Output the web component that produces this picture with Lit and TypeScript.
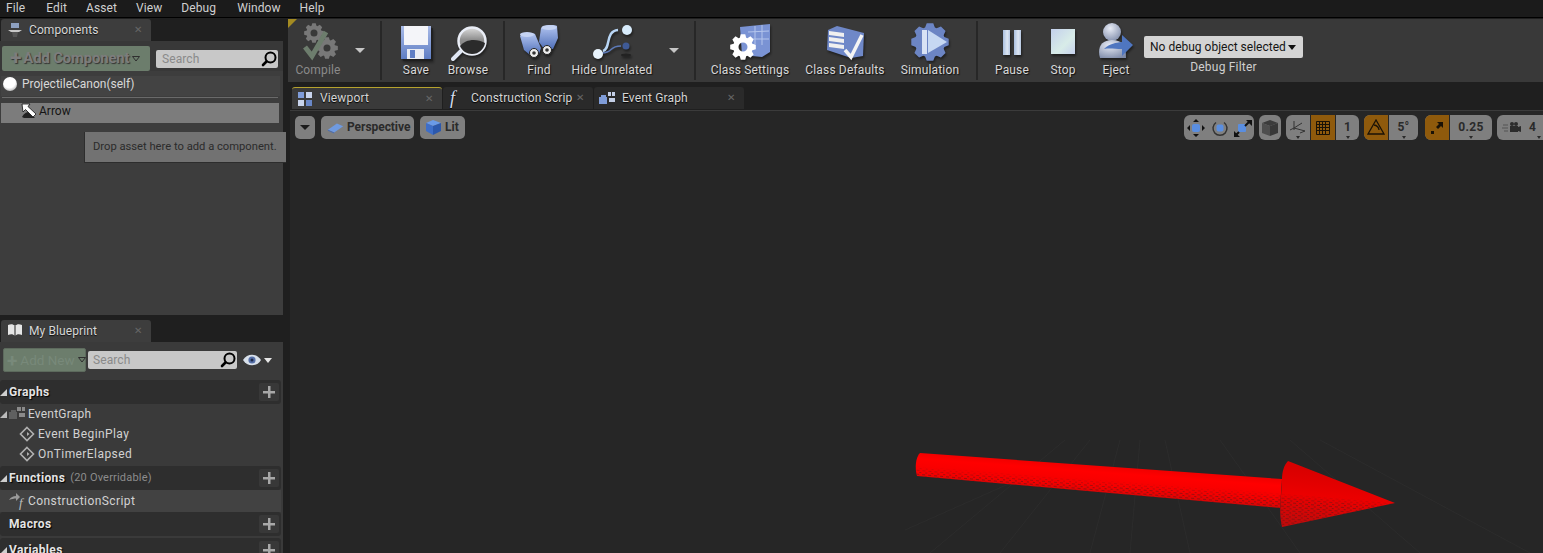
import { LitElement, html, css } from "lit";
import { customElement } from "lit/decorators.js";

function gear(cx: number, cy: number, r: number, teeth: number, hole: number, depth = 0.24): string {
  const pts: string[] = [];
  const step = (Math.PI * 2) / teeth;
  const inner = r * (1 - depth);
  for (let i = 0; i < teeth; i++) {
    const a = i * step - Math.PI / 2;
    const seq: [number, number][] = [
      [inner, a - step * 0.42], [r, a - step * 0.22], [r, a + step * 0.22], [inner, a + step * 0.42],
    ];
    for (const [rad, an] of seq) pts.push(`${(cx + rad * Math.cos(an)).toFixed(2)} ${(cy + rad * Math.sin(an)).toFixed(2)}`);
  }
  const h = hole;
  return `M${pts.join("L")}Z M${cx - h} ${cy}a${h} ${h} 0 1 0 ${2 * h} 0a${h} ${h} 0 1 0 ${-2 * h} 0Z`;
}

const toolIcons: Record<string, unknown> = {
  compile: html`<svg class="ti" viewBox="0 0 44 40">
    <path fill="#787878" fill-rule="evenodd" d=${gear(18, 11, 10, 8, 3.5)}></path>
    <path fill="#787878" fill-rule="evenodd" d=${gear(31, 26, 11, 8, 3.5)}></path>
    <path fill="none" stroke="#6d7d6d" stroke-width="5" d="M9 25l7 9 14-24"></path></svg>`,
  save: html`<svg class="ti" viewBox="0 0 44 40">
    <defs><linearGradient id="fl" x1="0" y1="0" x2="0" y2="1"><stop offset="0" stop-color="#a9bbe8"></stop><stop offset="1" stop-color="#5f7ec4"></stop></linearGradient></defs>
    <path fill="#1c1c1c" opacity=".6" d="M8 6h31v33H9z"></path>
    <path fill="url(#fl)" d="M7 4h30v33H7z"></path>
    <path fill="#f4f5f9" d="M10 4h24v19H10z"></path>
    <path fill="#e9ecf3" d="M13 27h17v10H13z"></path>
    <path fill="#5f7ec4" d="M16 28h5v8h-5z"></path></svg>`,
  browse: html`<svg class="ti" viewBox="0 0 44 40">
    <defs><linearGradient id="ln" x1="0" y1="0" x2="0" y2="1"><stop offset="0" stop-color="#dcdcdc"></stop><stop offset=".45" stop-color="#8f8f8f"></stop><stop offset="1" stop-color="#777"></stop></linearGradient></defs>
    <path stroke="#dfe6f4" stroke-width="4" stroke-linecap="round" d="M15 29L7 37"></path>
    <circle cx="26" cy="19" r="13.500" fill="url(#ln)" stroke="#e9edf6" stroke-width="2.5"></circle>
    <path fill="#2b2b2b" d="M14 24c5-7 17-8 25-3-1 6-6 11-13 11-5 0-10-3-12-8z"></path></svg>`,
  find: html`<svg class="ti" viewBox="0 0 44 40">
    <defs><linearGradient id="bn" x1="0" y1="0" x2="0" y2="1"><stop offset="0" stop-color="#b5c7f2"></stop><stop offset="1" stop-color="#4f6fb8"></stop></linearGradient></defs>
    <path fill="url(#bn)" d="M3 14c3-3 11-4 15-2l6 14-2 6-9 1-6-5z"></path>
    <path fill="url(#bn)" d="M24 6c4-3 12-4 16-2l1 12-5 11-9 0-5-7z"></path>
    <ellipse cx="10" cy="12.500" rx="7" ry="2.500" fill="#c6d4f4"></ellipse>
    <ellipse cx="32" cy="5.500" rx="7.500" ry="2.500" fill="#c6d4f4"></ellipse>
    <circle cx="17" cy="31" r="4.500" fill="#ececec" stroke="#222"></circle>
    <circle cx="30" cy="28" r="4.500" fill="#ececec" stroke="#222"></circle>
    <circle cx="17" cy="31" r="1.800" fill="#333"></circle><circle cx="30" cy="28" r="1.800" fill="#333"></circle></svg>`,
  hide: html`<svg class="ti" viewBox="0 0 44 40" overflow="visible">
    <path fill="none" stroke="#5d7ab8" stroke-width="1.5" d="M12 31c12 0 6-7 19-7"></path>
    <path fill="none" stroke="#b9d6f5" stroke-width="2.5" d="M13 29c8-2 2-20 15-21"></path>
    <circle cx="37" cy="8" r="5" fill="#d8ecfc"></circle>
    <circle cx="8" cy="32" r="5" fill="#e8f3fc"></circle>
    <circle cx="36" cy="24" r="3.5" fill="#3f5a96"></circle>
    <ellipse cx="36" cy="33" rx="5" ry="1.5" fill="#222"></ellipse></svg>`,
  settings: html`<svg class="ti" viewBox="0 0 44 40">
    <path fill="#7a93d4" d="M12 5l30-3v28l-8 5-20-2z"></path>
    <path fill="none" stroke="#b4c5ec" stroke-width="1" d="M20 10l21-1M22 17h19M27 4v18M34 3v20"></path>
    <path fill="#fff" fill-rule="evenodd" d=${gear(15, 25, 13, 8, 4.5)}></path></svg>`,
  defaults: html`<svg class="ti" viewBox="0 0 44 40">
    <path fill="#6f88c8" d="M5 8l9-4 27 7-1 23-12 2L4 28z"></path>
    <path fill="#f0f0f0" d="M6 9l15 2v4L6 13zM6 15l15 2v4L6 19zM6 21l15 2v4L6 25z"></path>
    <path fill="none" stroke="#f4f4f4" stroke-width="3.5" d="M22 28l6 7 11-22"></path></svg>`,
  sim: html`<svg class="ti" viewBox="0 0 44 40">
    <path fill="#6c85c4" d=${gear(22, 20, 19, 8, 0.01, 0.2)}></path>
    <path fill="#d8e2f4" d="M14 8h5v24h-5z"></path>
    <path fill="#c6d8f2" d="M20 8l19 12-19 11z"></path></svg>`,
  pause: html`<svg class="ti" viewBox="0 0 44 40">
    <defs><linearGradient id="pb" x1="0" y1="0" x2="1" y2="0"><stop offset="0" stop-color="#a9bfdf"></stop><stop offset=".6" stop-color="#dde6f2"></stop><stop offset="1" stop-color="#b7c8e2"></stop></linearGradient></defs>
    <path fill="url(#pb)" d="M13 8h7v25h-7z"></path><path fill="url(#pb)" d="M24 8h7v25h-7z"></path></svg>`,
  stop: html`<svg class="ti" viewBox="0 0 44 40">
    <defs><linearGradient id="st" x1="0" y1="0" x2="1" y2="1"><stop offset="0" stop-color="#c3d0ec"></stop><stop offset=".6" stop-color="#d8ece8"></stop><stop offset="1" stop-color="#c7d2ee"></stop></linearGradient></defs>
    <path fill="url(#st)" d="M10 7h24v25H10z"></path></svg>`,
  eject: html`<svg class="ti" viewBox="0 0 44 40" overflow="visible">
    <defs><radialGradient id="ej" cx=".4" cy=".3" r=".8"><stop offset="0" stop-color="#e8ecf6"></stop><stop offset="1" stop-color="#7c89a8"></stop></radialGradient></defs>
    <circle cx="18" cy="10" r="9" fill="url(#ej)"></circle>
    <path fill="url(#ej)" d="M6 36c-3-10 1-18 12-18s14 6 14 18z"></path>
    <path fill="#4f76c0" d="M10 27c6-6 12-6 18-7v-7l11 10-11 11v-7c-7 0-12-1-18 0z"></path></svg>`,
};

const toolbar = [
  { type: "item", icon: "compile", label: "Compile", w: 60, dim: true },
  { type: "arrow", w: 24 },
  { type: "sep", ml: 8 },
  { type: "item", icon: "save", label: "Save", w: 68 },
  { type: "item", icon: "browse", label: "Browse", w: 36 },
  { type: "sep", ml: 17 },
  { type: "item", icon: "find", label: "Find", w: 68 },
  { type: "item", icon: "hide", label: "Hide Unrelated", w: 78 },
  { type: "arrow", w: 24, ml: 11 },
  { type: "sep", ml: 8 },
  { type: "item", icon: "settings", label: "Class Settings", w: 108 },
  { type: "item", icon: "defaults", label: "Class Defaults", w: 82 },
  { type: "item", icon: "sim", label: "Simulation", w: 88 },
  { type: "sep", ml: 2 },
  { type: "item", icon: "pause", label: "Pause", w: 68 },
  { type: "item", icon: "stop", label: "Stop", w: 34 },
  { type: "item", icon: "eject", label: "Eject", w: 40, ml: 16 },
];

const cross = html`<span class="x">✕</span>`;
const magnifier = html`<svg class="mag" viewBox="0 0 16 16"><circle cx="9.5" cy="6.5" r="5" fill="none" stroke="#000" stroke-width="2"></circle><path stroke="#000" stroke-width="2.6" stroke-linecap="round" d="M5.5 10.5L2 14"></path></svg>`;
const diamond = html`<svg class="dia" viewBox="0 0 16 16"><path fill="none" stroke="#b0b0b0" stroke-width="1.6" d="M8 1.5L14.5 8 8 14.5 1.5 8z"></path><path fill="#b0b0b0" d="M8 6l2.5 2L8 10z"></path></svg>`;
const graphIcon = html`<svg class="gi" viewBox="0 0 16 12"><path fill="#5f6060" d="M0 5h8v7H0zM2 3h5v2H2z"></path><path fill="#8a8a8a" d="M8 0h4v4H8zM13 0h3v4h-3zM10 6h6v4h-6z"></path></svg>`;

@customElement("app-root")
export class AppRoot extends LitElement {
  static styles = css`
    :host { display: block; width: 1543px; height: 553px; overflow: hidden; background: #1f1f1f; color: #d6d6d6;
      font: 12px/1.2 Roboto, "Liberation Sans", sans-serif; }
    .menu { height: 17px; background: #1b1b1b; border-bottom: 1px solid #000; display: flex; align-items: center; padding-left: 6px; box-sizing: content-box; color: #d0d0d0; letter-spacing: .1px; }
    .menu span { margin-right: var(--mr, 20px); }
    .main { display: flex; height: 535px; }
    .left { width: 288px; flex: none; display: flex; flex-direction: column; background: #1f1f1f; }
    .tab { width: 150px; height: 22px; margin-left: 1px; background: #3d3d3d; border-radius: 3px 3px 0 0; display: flex; align-items: center; flex: none; color: #d8d8d8; text-shadow: 0 1px 1px #111; letter-spacing: .1px; }
    .tab .lab { flex: 1; }
    .tab .tic { width: 16px; height: 16px; margin: 0 6px 0 6px; }
    .x { color: #666; font-size: 10px; margin-right: 9px; text-shadow: none; }
    .t1 { margin-top: 1px; }
    .panel { width: 283px; background: #3a3a3a; position: relative; flex: none; overflow: visible; }
    .comp { height: 274px; background: #3d3d3d; }
    .ctool { display: flex; align-items: center; height: 30px; padding-top: 5px; box-sizing: border-box; background: #383838; }
    .addbtn { background: #6c7d6c; border-radius: 2px; color: #7d7d7d; font-weight: 700; display: flex; align-items: center; box-sizing: border-box; text-shadow: 1px 1px 1px #333; flex: none; }
    .ac { width: 148px; height: 25px; margin-left: 2px; font-size: 14.8px; padding-left: 8px; letter-spacing: -.1px; white-space: nowrap; }
    .ac b { font-size: 21px; font-weight: 700; line-height: 1; margin-right: 2px; }
    .trio { width: 8px; height: 6px; margin-left: 3px; flex: none; }
    .search { height: 18px; background: #c8c8c8; border-radius: 2px; color: #8a8a8a; display: flex; align-items: center; justify-content: space-between; padding: 0 1px 0 6px; box-sizing: border-box; flex: none; letter-spacing: .1px; }
    .s1 { width: 122px; margin: 1px 0 0 6px; }
    .mag { width: 16px; height: 16px; }
    .row1 { width: 279px; height: 20px; margin: 5px 0 0 1px; padding-bottom: 4px; box-sizing: border-box; background: #434343; display: flex; align-items: center; color: #d8d8d8; }
    .ball { width: 14px; height: 14px; margin: 0 5px 0 2px; border-radius: 50%; background: radial-gradient(circle at 45% 35%, #fff 50%, #999 90%); }
    .divider { width: 276px; height: 1px; background: #6a6a6a; margin: 1px 0 5px 2px; }
    .row2 { width: 278px; height: 20px; margin-left: 1px; padding-bottom: 4px; box-sizing: border-box; background: #7c7c7c; display: flex; align-items: center; color: #141414; }
    .arw { width: 17px; height: 16px; margin: 0 1px 0 20px; }
    .drop { position: absolute; left: 84px; top: 91px; width: 202px; height: 31px; box-sizing: border-box; background: #727272; border-left: 1px solid #2d2d2d; border-bottom: 1px solid #2d2d2d; display: flex; align-items: center; padding-left: 8px; font-size: 11.2px; color: #2b2b2b; white-space: nowrap; }
    .gap { height: 5px; flex: none; }
    .bp { flex: 1; overflow: hidden; }
    .btool { display: flex; align-items: center; height: 38px; padding-bottom: 8px; box-sizing: border-box; }
    .an { width: 83px; height: 24px; margin: 6px 0 0 3px; padding-left: 3px; color: #78897a; font-weight: 400; font-size: 13.5px; text-shadow: none; border: 1px solid #5d6a5d; white-space: nowrap; }
    .an b { font-size: 19px; font-weight: 700; margin-right: 3px; line-height: 1; }
    .s2 { width: 149px; margin: 6px 0 0 2px; padding-left: 5px; }
    .eye { width: 18px; height: 12px; margin: 6px 0 0 6px; }
    .wt { width: 0; height: 0; border: 4px solid transparent; border-top: 5px solid #e6e6e6; border-bottom: 0; margin: 7px 0 0 3px; }
    .sec { width: 281px; height: 24px; background: #2e2e2e; border-radius: 3px; display: flex; align-items: center; color: #e4e4e4; font-weight: 700; text-shadow: 1px 1px 1px #000; box-sizing: border-box; position: relative; letter-spacing: .35px; }
    .sec .nm { margin-left: 9px; }
    .sec small { font-weight: 400; font-size: 11px; color: #8c8c8c; margin-left: 5px; text-shadow: none; letter-spacing: .2px; }
    .plus { margin-left: auto; margin-right: 2px; width: 20px; height: 18px; background: #383838; border-radius: 2px; display: flex; align-items: center; justify-content: center; color: #a8a8a8; }
    .plus svg { width: 12px; height: 12px; }
    .st { position: absolute; left: 0; top: 9px; width: 0; height: 0; border-style: solid; border-width: 0 0 7px 7px; border-color: transparent transparent #cfcfcf transparent; }
    .it { height: 20px; display: flex; align-items: center; position: relative; color: #d2d2d2; letter-spacing: .42px; padding-top: 1px; box-sizing: border-box; }
    .it.g { padding-left: 28px; letter-spacing: .2px; }
    .it.g .gi { position: absolute; left: 9px; top: 3px; width: 16px; height: 12px; }
    .it.e { padding-left: 38px; }
    .dia { position: absolute; left: 19px; top: 2px; width: 16px; height: 16px; }
    .it .st2 { position: absolute; left: 0; top: 7px; width: 0; height: 0; border-style: solid; border-width: 0 0 7px 7px; border-color: transparent transparent #bbb transparent; }
    .cs { height: 22px; background: #424242; padding-left: 28px; padding-top: 0; width: 281px; }
    .cs svg { position: absolute; left: 9px; top: 2px; width: 17px; height: 18px; overflow: visible; }
    .sp2 { height: 2px; }
    .right { flex: 1; min-width: 0; position: relative; background: #1f1f1f; }
    .tb { margin-top: 1px; height: 63px; background: #393939; display: flex; position: relative; }
    .corner { position: absolute; left: 0; top: 0; width: 0; height: 0; border-style: solid; border-width: 9px 9px 0 0; border-color: #a48b22 transparent transparent transparent; }
    .ti { width: 44px; height: 40px; flex: none; filter: drop-shadow(1px 2px 1px rgba(0,0,0,.45)); }
    .item { display: flex; flex-direction: column; align-items: center; padding-top: 3px; flex: none; white-space: nowrap; color: #d8d8d8; text-shadow: 1px 1px 1px #111; letter-spacing: .15px; }
    .item .lb { line-height: 15px; margin-top: 1px; }
    .item.dim { color: #8a8a8a; text-shadow: none; }
    .item.dim .ti { filter: none; }
    .arrowitem { display: flex; justify-content: center; padding-top: 29px; flex: none; box-sizing: border-box; }
    .arrowitem i { width: 0; height: 0; border: 5px solid transparent; border-top: 5px solid #c6c6c6; border-bottom: 0; display: block; }
    .sep { width: 2px; height: 59px; margin-top: 2px; background: #272727; flex: none; }
    .debug { width: 159px; margin-left: 8px; flex: none; display: flex; flex-direction: column; align-items: center; padding-top: 17px; }
    .combo { width: 100%; height: 22px; background: #d4d4d4; border-radius: 2px; color: #151515; display: flex; align-items: center; padding-left: 6px; box-sizing: border-box; white-space: nowrap; }
    .combo i { width: 0; height: 0; border: 4px solid transparent; border-top: 5px solid #111; border-bottom: 0; margin-left: 2px; }
    .dbl { margin-top: 2px; line-height: 15px; color: #cfcfcf; letter-spacing: .2px; }
    .tabs { display: flex; padding: 5px 0 0 4px; height: 28px; box-sizing: border-box; }
    .dt { width: 150px; height: 22px; box-sizing: border-box; background: #2a2a2a; border-radius: 3px 3px 0 0; display: flex; align-items: center; margin-right: 1px; color: #d6d6d6; flex: none; letter-spacing: .15px; text-shadow: 0 1px 1px #000; white-space: nowrap; }
    .dt.on { background: #3a3a3a; border-top: 1px solid #b6a32e; }
    .dt .tic { width: 16px; height: 16px; margin: 0 7px 0 5px; flex: none; }
    .dt .lab { flex: 1; min-width: 0; }
    .dt .x { margin: 0 9px 0 0; flex: none; }
    .vp { margin-left: 2px; height: 443px; background: #262626; border-top: 1px solid #3b3b3b; position: relative; overflow: hidden; box-sizing: border-box; }
    .scene { position: absolute; left: 0; top: 0; width: 1253px; height: 442px; }
    .vbar { position: relative; display: flex; padding: 3px 0 0 5px; height: 26px; box-sizing: content-box; align-items: flex-start; }
    .vb { height: 23px; margin-top: 2px; background: #7f7f7f; border-radius: 5px; display: flex; align-items: center; box-sizing: border-box; color: #2a2a2a; font-weight: 700; flex: none; white-space: nowrap; }
    .vb svg { flex: none; }
    .v1 { width: 20px; justify-content: center; }
    .v1 i { width: 0; height: 0; border: 5px solid transparent; border-top: 5px solid #1c1c1c; border-bottom: 0; }
    .v2 { width: 93px; margin-left: 6px; padding-left: 6px; gap: 2px; letter-spacing: -.05px; }
    .v3 { width: 45px; margin-left: 6px; padding-left: 5px; gap: 3px; }
    .vr { margin-left: auto; display: flex; margin-right: -7px; }
    .grp { height: 25px; margin: 1px 5px 0 0; background: #7f7f7f; border-radius: 6px; display: flex; overflow: hidden; flex: none; }
    .seg { height: 100%; display: flex; align-items: center; justify-content: center; position: relative; box-sizing: border-box; color: #2a2a2a; font-weight: 700; letter-spacing: .3px; }
    .seg + .seg { border-left: 1px solid #262626; }
    .seg.or { background: #8f5a0c; }
    .seg.dn::after { content: ""; position: absolute; bottom: 1px; left: 50%; margin-left: -2px; border: 2px solid transparent; border-top: 3px solid #2a2a2a; border-bottom: 0; }
    .g1 svg { width: 20px; height: 20px; }
  `;

  render() {
    const menus: [string, number][] = [["File", 21], ["Edit", 19], ["Asset", 19], ["View", 19], ["Debug", 21], ["Window", 19], ["Help", 0]];
    return html`
      <div class="menu">${menus.map(([m, r]) => html`<span style="--mr:${r}px">${m}</span>`)}</div>
      <div class="main">
        <div class="left">
          <div class="tab t1">
            <svg class="tic" viewBox="0 0 16 16"><path fill="#8ea0c0" d="M4 1h8v5H4z"></path><path fill="#c8c8c8" d="M1 8h14l-3 2H4z"></path><path fill="#555" d="M5 10h6l-1 5H6z"></path></svg>
            <span class="lab">Components</span>${cross}
          </div>
          <div class="panel comp">
            <div class="ctool">
              <div class="addbtn ac"><b>+</b>Add Component<svg class="trio" viewBox="0 0 8 6"><path fill="none" stroke="#2f2f2f" d="M.5.5h7L4 5z"></path></svg></div>
              <div class="search s1"><span>Search</span>${magnifier}</div>
            </div>
            <div class="row1"><span class="ball"></span>ProjectileCanon(self)</div>
            <div class="divider"></div>
            <div class="row2">
              <svg class="arw" viewBox="0 0 17 16"><path fill="#222" d="M1 14c2-4 5-5 7-5l6 6H3z"></path><path fill="#fff" stroke="#111" stroke-width=".8" d="M1 1h8L7 3.5 15 11l-3 3-7.5-7.5L2 9z"></path></svg>
              Arrow
            </div>
            <div class="drop">Drop asset here to add a component.</div>
          </div>
          <div class="gap"></div>
          <div class="tab">
            <svg class="tic" viewBox="0 0 16 16"><path fill="#e6e6e6" d="M1 2c3-1 5-1 7 1 2-2 4-2 7-1v10c-3-1-5-1-7 1-2-2-4-2-7-1z"></path><path fill="#222" d="M7.5 3h1v10h-1z"></path></svg>
            <span class="lab">My Blueprint</span>${cross}
          </div>
          <div class="panel bp">
            <div class="btool">
              <div class="addbtn an"><b>+</b>Add New<svg class="trio" viewBox="0 0 8 6"><path fill="none" stroke="#2f2f2f" d="M.5.5h7L4 5z"></path></svg></div>
              <div class="search s2"><span>Search</span>${magnifier}</div>
              <svg class="eye" viewBox="0 0 18 12"><path fill="#d8e0ea" d="M0 6c4-7 14-7 18 0-4 7-14 7-18 0z"></path><circle cx="9" cy="6" r="3.6" fill="#5670a8"></circle><circle cx="9" cy="6" r="1.5" fill="#1d2a4a"></circle></svg>
              <span class="wt"></span>
            </div>
            ${this.sec("Graphs", true)}
            <div class="it g"><span class="st2"></span>${graphIcon}EventGraph</div>
            <div class="it e">${diamond}Event BeginPlay</div>
            <div class="it e">${diamond}OnTimerElapsed</div>
            <div class="sp2"></div>
            ${this.sec("Functions", true, "(20 Overridable)")}
            <div class="it cs"><svg viewBox="0 0 17 18"><path fill="#9a9a9a" d="M0 8c2-3 4-4 7-4V1l4 4-4 4V6.500C5 6.500 3 7 0 8z"></path><text x="10" y="15" font-family="Liberation Serif, serif" font-style="italic" font-size="13" fill="#bdbdbd">f</text></svg>ConstructionScript</div>
            ${this.sec("Macros", false)}
            <div class="sp2"></div>
            ${this.sec("Variables", true)}
          </div>
        </div>
        <div class="right">
          <div class="tb">
            <span class="corner"></span>
            ${toolbar.map((t: any) => {
              if (t.type === "sep") return html`<div class="sep" style="margin-left:${t.ml}px"></div>`;
              if (t.type === "arrow") return html`<div class="arrowitem" style="width:${t.w}px;margin-left:${t.ml || 0}px"><i></i></div>`;
              return html`<div class="item ${t.dim ? "dim" : ""}" style="width:${t.w}px;margin-left:${t.ml || 0}px">${toolIcons[t.icon]}<span class="lb">${t.label}</span></div>`;
            })}
            <div class="debug">
              <div class="combo">No debug object selected<i></i></div>
              <div class="dbl">Debug Filter</div>
            </div>
          </div>
          <div class="tabs">
            <div class="dt on">
              <svg class="tic" viewBox="0 0 16 16"><path fill="#7f9cd8" d="M1 1h6v6H1z"></path><path fill="#c8d4ec" d="M9 1h6v6H9zM1 9h6v6H1z"></path><path fill="#6a88c8" d="M9 9h6v6H9z"></path></svg>
              <span class="lab">Viewport</span>${cross}
            </div>
            <div class="dt">
              <svg class="tic" viewBox="0 0 16 16" style="overflow:visible"><text x="2" y="14" font-family="Liberation Serif, serif" font-style="italic" font-size="18" fill="#d6def0">f</text></svg>
              <span class="lab">Construction Scrip</span>${cross}
            </div>
            <div class="dt">
              <svg class="tic" viewBox="0 0 16 12"><path fill="#7f9cd8" d="M0 5h8v7H0zM2 3h5v2H2z"></path><path fill="#c4cfe6" d="M9 0h3v4H9zM13 0h3v4h-3zM10 6h6v4h-6z"></path></svg>
              <span class="lab">Event Graph</span>${cross}
            </div>
          </div>
          <div class="vp">
            <svg class="scene" viewBox="290 111 1253 442">
              <defs>
                <linearGradient id="shaft" gradientUnits="userSpaceOnUse" x1="1098" y1="460" x2="1095" y2="500">
                  <stop offset="0" stop-color="#e40000"></stop><stop offset=".3" stop-color="#ff0000"></stop><stop offset=".65" stop-color="#f40000"></stop><stop offset="1" stop-color="#c00a0a"></stop>
                </linearGradient>
                <linearGradient id="head" gradientUnits="userSpaceOnUse" x1="1330" y1="470" x2="1325" y2="525">
                  <stop offset="0" stop-color="#d80000"></stop><stop offset=".5" stop-color="#ec0000"></stop><stop offset="1" stop-color="#c20a0a"></stop>
                </linearGradient>
                <pattern id="dots" width="6" height="4" patternUnits="userSpaceOnUse" patternTransform="rotate(5)">
                  <path d="M0 0h3v1H0zM3 2h2v1H3z" fill="#7a1414" opacity=".75"></path>
                </pattern>
                <linearGradient id="fadeM" gradientUnits="userSpaceOnUse" x1="1100" y1="466" x2="1097.800" y2="496">
                  <stop offset="0" stop-color="#000"></stop><stop offset=".45" stop-color="#000"></stop><stop offset=".7" stop-color="#fff"></stop><stop offset="1" stop-color="#fff"></stop>
                </linearGradient>
                <mask id="fm" maskUnits="userSpaceOnUse" x="900" y="440" width="520" height="110"><rect x="900" y="440" width="520" height="110" fill="url(#fadeM)"></rect></mask>
              </defs>
              <g stroke="#2c2c2c" stroke-width="1" fill="none">
                <path d="M1090 553L1120 440M1000 553L1090 440M930 553L1065 440M1190 553L1165 440M1300 553L1220 440M1420 553L1290 440M1530 553L1320 440M905 530L1040 470M1130 553L1140 440"></path>
              </g>
              <path fill="url(#shaft)" d="M920 453L1282 479L1280 508L917 476C915 470 915 458 920 453Z"></path>
              <path fill="url(#dots)" mask="url(#fm)" d="M920 453L1282 479L1280 508L917 476C915 470 915 458 920 453Z"></path>
              <path fill="url(#head)" d="M1288 461L1395 503L1282 527C1278 510 1282 495 1282 479C1282 472 1284 465 1288 461Z"></path>
              <path fill="url(#dots)" mask="url(#fm)" d="M1288 461L1395 503L1282 527C1278 510 1282 495 1282 479C1282 472 1284 465 1288 461Z"></path>
            </svg>
            <div class="vbar">
              <div class="vb v1"><i></i></div>
              <div class="vb v2"><svg width="18" height="14" viewBox="0 0 20 14"><path fill="#6f9ae0" d="M1 9l10-7 7 3-10 7z"></path><path fill="#4a6cb0" d="M1 9l7 3v1l-7-3z"></path></svg><span>Perspective</span></div>
              <div class="vb v3"><svg width="17" height="17" viewBox="0 0 17 17"><path fill="#6a9ae8" d="M1 4l7-3 8 3-8 3z"></path><path fill="#3e6ec8" d="M1 4l7 3v9l-7-4z"></path><path fill="#2c58ac" d="M8 7l8-3v8l-8 4z"></path></svg><span>Lit</span></div>
              <div class="vr">
                <div class="grp g1">
                  <div class="seg" style="width:24px"><svg viewBox="0 0 20 20"><path fill="#111" d="M10 1l3 3H7zM10 19l-3-3h6zM1 10l3-3v6zM19 10l-3 3V7z"></path><rect x="6" y="6" width="8" height="8" rx="2" fill="#5a8ee0"></rect></svg></div>
                  <div class="seg" style="width:23px;border:0"><svg viewBox="0 0 20 20"><path fill="none" stroke="#333" stroke-width="1.5" d="M6 4.500A7 7 0 1 0 14 4.500"></path><rect x="6.500" y="6.500" width="7" height="7" rx="2" fill="#5a8ee0"></rect></svg></div>
                  <div class="seg" style="width:23px;border:0"><svg viewBox="0 0 20 20"><rect x="5" y="6" width="8" height="8" rx="1" fill="#5a8ee0"></rect><path stroke="#111" stroke-width="2" d="M12 8l5-5M3 17l3-3"></path><path fill="#111" d="M13 2h6v6zM1 13l6 6H1z"></path></svg></div>
                </div>
                <div class="grp"><div class="seg" style="width:22px"><svg width="18" height="18" viewBox="0 0 18 18"><path fill="#3c3c3c" d="M1 4l8-3 8 3-8 3z"></path><path fill="#4e4e4e" d="M1 4l8 3v10l-8-3z"></path><path fill="#383838" d="M9 7l8-3v10l-8 3z"></path></svg></div></div>
                <div class="grp">
                  <div class="seg dn" style="width:24px"><svg width="18" height="16" viewBox="0 0 18 16"><path fill="none" stroke="#333" d="M5 1v9M1 10l4-2 11 3-5 2M5 8l8-5"></path></svg></div>
                  <div class="seg or" style="width:25px"><svg width="14" height="14" viewBox="0 0 14 14"><path fill="none" stroke="#1a1206" d="M.5.5h13v13H.5zM3.500.5v13M6.500.5v13M9.500.5v13M.5 3.500h13M.5 6.500h13M.5 9.500h13"></path></svg></div>
                  <div class="seg dn" style="width:24px">1</div>
                </div>
                <div class="grp">
                  <div class="seg or" style="width:24px"><svg width="18" height="17" viewBox="0 0 18 17"><path fill="none" stroke="#1a1206" stroke-width="1.3" d="M9 1L1 15h16zM7 6c3 0 5 3 5 5"></path></svg></div>
                  <div class="seg dn" style="width:30px">5°</div>
                </div>
                <div class="grp" style="margin-left:2px">
                  <div class="seg or" style="width:24px"><svg width="16" height="16" viewBox="0 0 16 16"><path fill="#1a1206" d="M8 2h6v6l-2-2-3 3-2-2 3-3zM2 11h3v3H2z"></path></svg></div>
                  <div class="seg dn" style="width:43px">0.25</div>
                </div>
                <div class="grp" style="margin-right:0">
                  <div class="seg" style="width:30px;border:0"><svg width="20" height="14" viewBox="0 0 20 14"><path fill="#2c2c2c" d="M8 5h8v6H8zM16 6l3-1v6l-3-1z"></path><circle cx="10" cy="3" r="2" fill="#2c2c2c"></circle><circle cx="14" cy="3" r="2" fill="#2c2c2c"></circle><path stroke="#555" d="M1 4h5M0 7h6M2 10h4"></path></svg></div>
                  <div class="seg dn" style="width:23px;border:0;justify-content:flex-start;padding-left:2px">4</div>
                </div>
              </div>
            </div>
          </div>
        </div>
      </div>
    `;
  }

  sec(name: string, open: boolean, extra?: string) {
    return html`<div class="sec">${open ? html`<span class="st"></span>` : ""}<span class="nm">${name}</span>${extra ? html`<small>${extra}</small>` : ""}
      <span class="plus"><svg viewBox="0 0 12 12"><path fill="#a8a8a8" d="M5 0h2.500v5H12v2.500H7.500V12H5V7.500H0V5h5z"></path></svg></span></div>`;
  }
}
